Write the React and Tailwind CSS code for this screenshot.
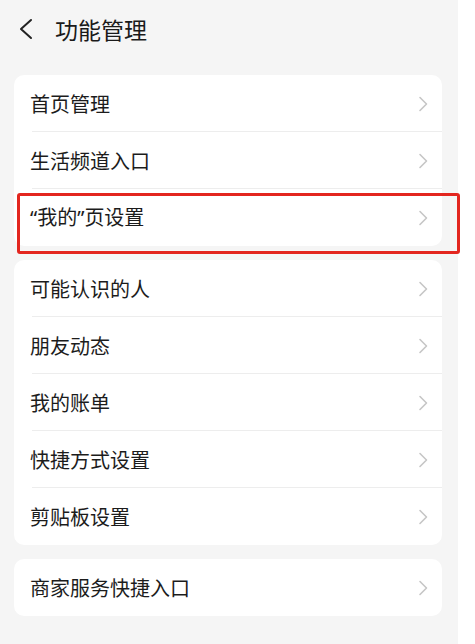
import React from "react";

const font = { fontFamily: '"Noto Sans CJK SC", "Noto Sans", sans-serif' };

function Chevron() {
  return (
    <svg width="10" height="16" viewBox="0 0 10 16" className="shrink-0">
      <polyline points="2,1.5 8.5,8 2,14.5" fill="none" stroke="#c6c6c6" strokeWidth="1.6" strokeLinecap="round" strokeLinejoin="round" />
    </svg>
  );
}

function Row({ label, last }) {
  return (
    <div className="relative flex h-[57px] items-center justify-between pl-[16px] pr-[14px]">
      <span className="text-[20px] leading-none text-[#1c1c1c]">{label}</span>
      <Chevron />
      {!last && <div className="absolute bottom-0 left-[18px] right-0 h-px bg-[#ededed]" />}
    </div>
  );
}

function Card({ items }) {
  return (
    <div className="overflow-hidden rounded-[10px] bg-white">
      {items.map((it, i) => (
        <Row key={i} label={it} last={i === items.length - 1} />
      ))}
    </div>
  );
}

export default function App() {
  return (
    <div className="flex min-h-[644px] w-[475px] bg-white" style={font}>
      <div className="relative w-[458px] bg-[#f5f5f5]">
        <div className="flex h-[75px] items-start pt-[16px]">
          <svg width="16" height="22" viewBox="0 0 16 22" className="ml-[18px] mt-[2px]">
            <polyline points="13,2 3,11 13,20" fill="none" stroke="#222" strokeWidth="2" strokeLinecap="round" strokeLinejoin="round" />
          </svg>
          <span className="ml-[21px] text-[23px] leading-[26px] text-[#1a1a1a]">功能管理</span>
        </div>
        <div className="flex w-[442px] flex-col gap-[14px] pl-[14px]">
          <Card
            items={[
              "首页管理",
              "生活频道入口",
              <>
                <span style={{ fontFamily: '"Noto Sans", sans-serif' }}>“</span>我的<span style={{ fontFamily: '"Noto Sans", sans-serif' }}>”</span>页设置
              </>,
            ]}
          />
          <Card items={["可能认识的人", "朋友动态", "我的账单", "快捷方式设置", "剪贴板设置"]} />
          <Card items={["商家服务快捷入口"]} />
        </div>
        <div className="absolute left-[17px] top-[193px] h-[61px] w-[443px] rounded-[3px] border-[3px] border-[#e3261f]" />
      </div>
      <div className="flex-1 bg-white" />
    </div>
  );
}
